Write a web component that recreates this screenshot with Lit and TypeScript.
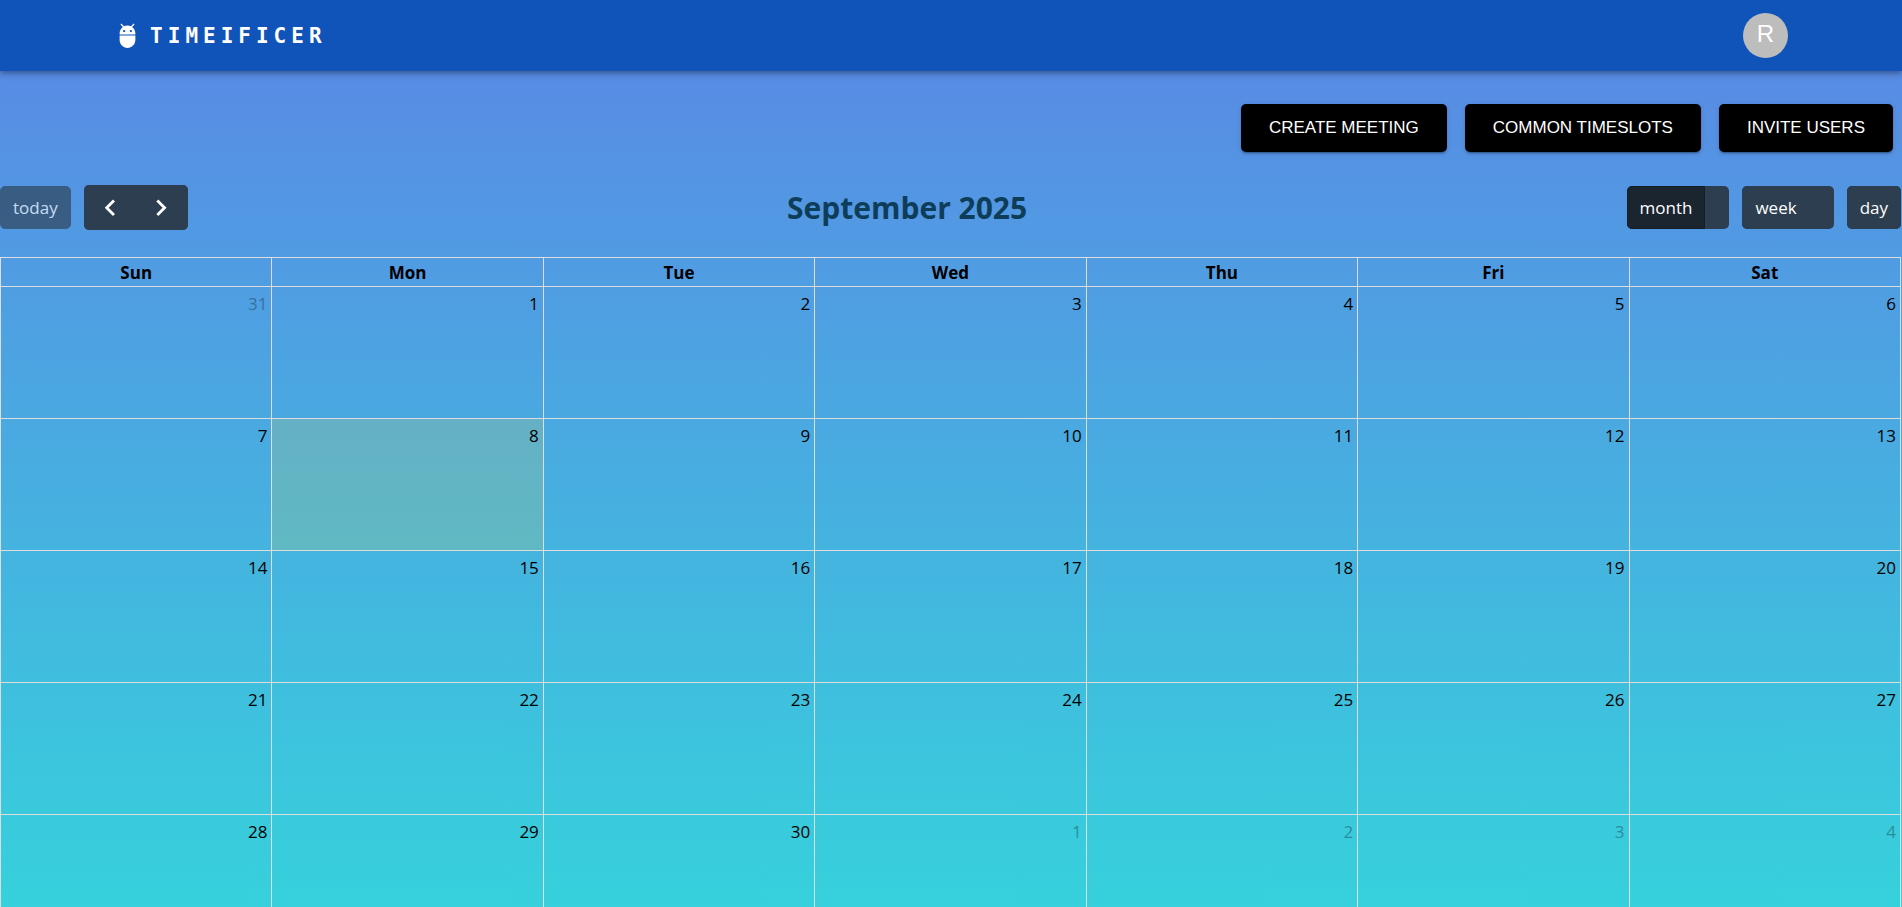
import { LitElement, html, css } from "lit";
import { customElement, state } from "lit/decorators.js";
import { classMap } from "lit/directives/class-map.js";

interface Day {
  date: number;
  other: boolean;
  today: boolean;
}

const WEEKDAYS = ["Sun", "Mon", "Tue", "Wed", "Thu", "Fri", "Sat"];

@customElement("app-header")
class AppHeader extends LitElement {
  static styles = css`
    :host {
      display: block;
      position: relative;
      background: #1053b9;
      box-shadow: 0 2px 4px -1px rgba(0, 0, 0, 0.2), 0 4px 5px 0 rgba(0, 0, 0, 0.14),
        0 1px 10px 0 rgba(0, 0, 0, 0.12);
    }
    .bar {
      display: flex;
      align-items: center;
      justify-content: space-between;
      padding: 13px 6%;
    }
    .brand {
      display: flex;
      align-items: center;
      gap: 9px;
      color: #fff;
      text-decoration: none;
      font: 700 21px/32px "DejaVu Sans Mono", monospace;
      letter-spacing: 5px;
    }
    .logo {
      width: 27px;
      height: 27px;
      fill: currentColor;
    }
    .avatar {
      width: 45px;
      height: 45px;
      padding: 0 0 4px;
      border: 0;
      border-radius: 50%;
      background: #bdbdbd;
      color: #fff;
      font: 24px/24px "Liberation Sans", Arial, sans-serif;
    }
  `;

  render() {
    return html`
      <header class="bar">
        <a class="brand" href="#">
          <svg class="logo" viewBox="0 0 24 24" aria-hidden="true">
            <path
              d="M5 16c0 3.87 3.13 7 7 7s7-3.13 7-7v-4H5v4zM16.12 4.37l2.1-2.1-.82-.83-2.3 2.31C14.16 3.28 13.12 3 12 3s-2.16.28-3.09.75L6.6 1.44l-.82.83 2.1 2.1C6.14 5.64 5 7.68 5 10v1h14v-1c0-2.32-1.14-4.36-2.88-5.63zM9 9c-.55 0-1-.45-1-1s.45-1 1-1 1 .45 1 1-.45 1-1 1zm6 0c-.55 0-1-.45-1-1s.45-1 1-1 1 .45 1 1-.45 1-1 1z"
            />
          </svg>
          <span>TIMEIFICER</span>
        </a>
        <button class="avatar" type="button">R</button>
      </header>
    `;
  }
}

@customElement("month-calendar")
class MonthCalendar extends LitElement {
  @state() private view = "month";

  static styles = css`
    :host {
      display: block;
      padding-right: 1px;
      font: 17px/26px "Open Sans", "Noto Sans", sans-serif;
      color: #000;
    }
    .toolbar {
      display: flex;
      align-items: center;
      justify-content: space-between;
      margin-bottom: 27px;
    }
    .chunk {
      display: flex;
      align-items: center;
      gap: 13px;
    }
    .title {
      margin: 0;
      color: #0e3d5a;
      font-size: 30px;
      line-height: 42px;
      font-weight: 700;
    }
    .group {
      display: flex;
      border-radius: 5px;
      background: #2c3e50;
    }
    .group-month,
    .group-week {
      padding-right: 24px;
    }
    .button {
      height: 43px;
      padding: 0 12px;
      border: 1px solid #2c3e50;
      border-radius: 5px;
      background: #2c3e50;
      color: #fff;
      font: inherit;
    }
    .button:disabled {
      opacity: 0.65;
    }
    .active {
      border-color: #151e27;
      border-radius: 5px 0 0 5px;
      background: #1a252f;
    }
    .arrow {
      display: flex;
      align-items: center;
      justify-content: center;
      width: 52px;
      height: 45px;
      padding: 0;
    }
    .chevron {
      width: 27px;
      height: 27px;
      fill: none;
      stroke: #fff;
      stroke-width: 2.8;
      stroke-linecap: square;
    }
    .grid {
      width: 100%;
      table-layout: fixed;
      border-collapse: collapse;
    }
    .head,
    .cell {
      border: 1px solid #ddd;
    }
    .head {
      padding: 2px 0 0;
      font-weight: 700;
    }
    .cell {
      height: 123px;
      padding: 4px;
      text-align: right;
      vertical-align: top;
    }
    .today {
      background: rgba(255, 220, 40, 0.15);
    }
    .other {
      opacity: 0.3;
    }
  `;

  private get weeks(): Day[][] {
    const start = new Date(2025, 7, 31);
    return Array.from({ length: 5 }, (_, w) =>
      Array.from({ length: 7 }, (_, d) => {
        const day = new Date(start.getFullYear(), start.getMonth(), start.getDate() + w * 7 + d);
        const other = day.getMonth() !== 8;
        return { date: day.getDate(), other, today: !other && day.getDate() === 8 };
      })
    );
  }

  private viewButton(name: string) {
    return html`
      <div class="group group-${name}">
        <button
          type="button"
          class=${classMap({ button: true, active: this.view === name })}
          @click=${() => (this.view = name)}
        >${name}</button>
      </div>
    `;
  }

  render() {
    return html`
      <div class="toolbar">
        <div class="chunk">
          <button class="button" type="button" disabled>today</button>
          <div class="group">
            <button class="button arrow" type="button" aria-label="Previous month">
              <svg class="chevron" viewBox="0 0 27 27"><path d="M17 7.5 10.7 13.8 17 20.1" /></svg>
            </button>
            <button class="button arrow" type="button" aria-label="Next month">
              <svg class="chevron" viewBox="0 0 27 27"><path d="M10.3 7.5 16.6 13.8 10.3 20.1" /></svg>
            </button>
          </div>
        </div>
        <h2 class="title">September 2025</h2>
        <div class="chunk">${["month", "week", "day"].map((v) => this.viewButton(v))}</div>
      </div>
      <table class="grid">
        <thead>
          <tr>${WEEKDAYS.map((d) => html`<th class="head" scope="col">${d}</th>`)}</tr>
        </thead>
        <tbody>
          ${this.weeks.map(
            (week) => html`<tr>
              ${week.map(
                (d) => html`<td class=${classMap({ cell: true, today: d.today })}>
                  <span class=${classMap({ other: d.other })}>${d.date}</span>
                </td>`
              )}
            </tr>`
          )}
        </tbody>
      </table>
    `;
  }
}

@customElement("app-root")
class AppRoot extends LitElement {
  static styles = css`
    :host {
      display: block;
      height: 100vh;
      overflow: hidden;
      background: linear-gradient(to bottom, #5b86e5, #36d1dc);
    }
    .actions {
      display: flex;
      justify-content: flex-end;
      gap: 18px;
      padding: 33px 9px;
    }
    .action {
      height: 48px;
      padding: 0 28px;
      border: 0;
      border-radius: 5px;
      background: #000;
      color: #fff;
      font: 17px/28px "Liberation Sans", Arial, sans-serif;
      text-transform: uppercase;
      box-shadow: 0 3px 1px -2px rgba(0, 0, 0, 0.2), 0 2px 2px 0 rgba(0, 0, 0, 0.14),
        0 1px 5px 0 rgba(0, 0, 0, 0.12);
    }
  `;

  render() {
    return html`
      <app-header></app-header>
      <main>
        <div class="actions">
          <button class="action" type="button">Create Meeting</button>
          <button class="action" type="button">Common Timeslots</button>
          <button class="action" type="button">Invite Users</button>
        </div>
        <month-calendar></month-calendar>
      </main>
    `;
  }
}
